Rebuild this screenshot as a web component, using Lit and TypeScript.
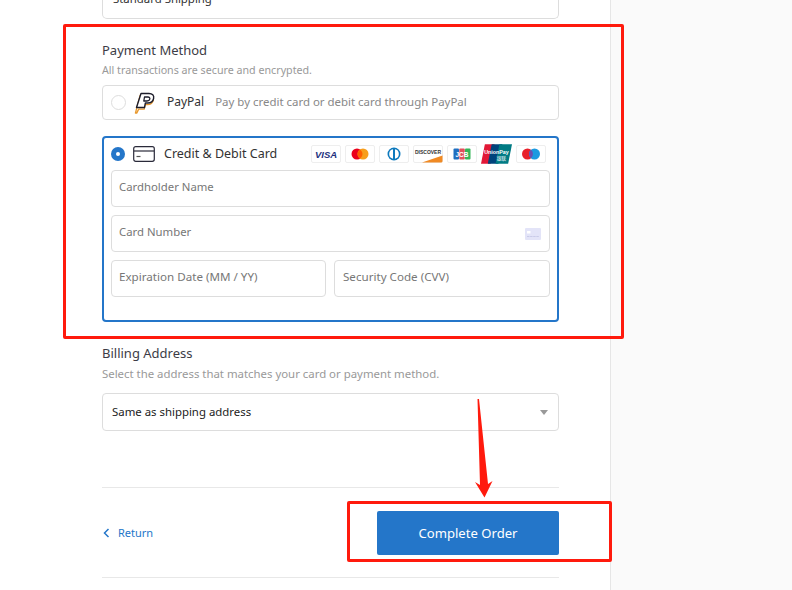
import { LitElement, html, css, svg } from "lit";
import { customElement } from "lit/decorators.js";

@customElement("app-root")
export class AppRoot extends LitElement {
  static styles = css`
    :host { display: flex; position: relative; width: 792px; height: 590px; overflow: hidden; background: #fff;
      font-family: "Noto Sans", "Open Sans", sans-serif; color: #333; }
    * { box-sizing: border-box; }
    .main { width: 611px; height: 590px; border-right: 1px solid #e6e6e6; padding-left: 102px; flex: none; }
    .side { flex: 1; background: #fafafa; }
    .col { width: 457px; }
    .ship { height: 40px; margin-top: -21px; border: 1px solid #ddd; border-top: 0; border-radius: 0 0 5px 5px;
      padding: 0 10px; font-size: 11.400px; line-height: 12px; color: #333; overflow: hidden; }
    .ship span { display: block; margin-top: 14px; }
    .title { font-size: 13px; line-height: 20px; color: #3c3c46; }
    .sub { font-size: 10.700px; line-height: 14px; color: #999; }
    .pay-title { margin-top: 21px; }
    .sub-pay { margin-top: 3px; }
    .paypal { height: 35px; margin-top: 8px; border: 1px solid #ddd; border-radius: 4px; display: flex; align-items: center; padding-left: 8px; }
    .radio-off { width: 15px; height: 15px; border: 1px solid #ddd; border-radius: 50%; flex: none; }
    .pp-icon { margin-left: 8px; flex: none; }
    .pp-name { margin-left: 11px; font-size: 12px; color: #333; margin-top: -2px; }
    .pp-desc { margin-left: 11px; font-size: 11.450px; color: #888; margin-top: -2px; }
    .card-box { height: 186px; margin-top: 16px; border: 2px solid #2476c9; border-radius: 4px; padding: 0 7px; }
    .card-head { height: 32px; display: flex; align-items: center; }
    .radio-on { width: 14px; height: 14px; border-radius: 50%; background: #2476c9; display: flex; align-items: center; justify-content: center; flex: none; }
    .radio-on i { width: 4px; height: 4px; border-radius: 50%; background: #fff; display: block; }
    .cc-icon { margin-left: 8px; flex: none; }
    .cc-name { margin-left: 9px; font-size: 12.500px; color: #333; white-space: nowrap; margin-top: -2px; }
    .logos { margin-left: auto; margin-right: 4px; display: flex; gap: 4px; align-items: center; }
    .logo { width: 30px; height: 18px; display: block; }
    .logo-up { width: 31px; height: 20px; }
    .field { height: 37px; border: 1px solid #ddd; border-radius: 4px; display: flex; align-items: center; padding: 0 8px 0 7px; font-size: 11.350px; color: #777; margin-bottom: 8px; position: relative; justify-content: space-between; }
    .field span { margin-top: -5px; }
    .split { display: flex; gap: 8px; }
    .split .field { flex: none; font-size: 11.620px; }
    .w1 { width: 215px; }
    .w2 { width: 216px; padding-left: 8px; }
    .bill-title { margin-top: 21px; }
    .bill-sub { margin-top: 4px; font-size: 11.400px; }
    .select { height: 38px; margin-top: 12px; border: 1px solid #ddd; border-radius: 4px; display: flex; align-items: center; justify-content: space-between; padding: 0 10px 0 9px; font-size: 11.400px; color: #222; }
    .select span { margin-top: -2px; }
    .caret { width: 0; height: 0; border-left: 4.500px solid transparent; border-right: 4.500px solid transparent; border-top: 5px solid #999; }
    .hr { height: 1px; background: #e8e8e8; }
    .hr1 { margin-top: 56px; }
    .actions { height: 89px; display: flex; align-items: center; justify-content: space-between; }
    .ret { display: flex; align-items: center; gap: 8px; font-size: 11px; color: #2476c9; padding-left: 1px; }
    .btn { width: 182px; height: 44px; background: #2476c9; color: #fff; border-radius: 2px; display: flex; align-items: center; justify-content: center; font-size: 13.100px; }
    .mark { position: absolute; border: 3px solid #ff1a0d; border-radius: 2px; pointer-events: none; }
    .m1 { left: 63px; top: 24px; width: 561px; height: 315px; }
    .m2 { left: 347px; top: 501px; width: 265px; height: 61px; }
    .arrow { position: absolute; left: 470px; top: 396px; }
  `;

  private logoFrame(inner: unknown) {
    return html`<svg class="logo" viewBox="0 0 30 18">
      <rect x=".5" y=".5" width="29" height="17" rx="1.500" fill="#fff" stroke="#eee"></rect>${inner}</svg>`;
  }

  render() {
    return html`
      <div class="main"><div class="col">
        <div class="ship"><span>Standard Shipping</span></div>
        <div class="title pay-title">Payment Method</div>
        <div class="sub sub-pay">All transactions are secure and encrypted.</div>
        <div class="paypal">
          <div class="radio-off"></div>
          <svg class="pp-icon" width="22" height="22" viewBox="0 0 22 22">
            <path d="M6.500 2.500h8.500c3.300 0 5.300 1.800 4.600 5-.6 2.900-3 4.500-5.800 4.500h-2.400l-.9 4.500H5L3 20.500H1.700z" fill="#fff" stroke="#e8982c" stroke-width="1.300" stroke-linejoin="round" transform="translate(-.3 .6)"></path>
            <path d="M7 1.500h8c3.300 0 5.300 1.800 4.600 5-.6 2.900-3 4.500-5.800 4.500h-2.400l-.9 4.500H2.500z" fill="#fff" stroke="#1d1d2b" stroke-width="1.400" stroke-linejoin="round"></path>
            <path d="M10.500 5h3.400c1.500 0 2.200.8 1.900 2.100-.3 1.300-1.400 1.900-2.800 1.900H9.800z" fill="#fff" stroke="#1d1d2b" stroke-width="1.300" stroke-linejoin="round"></path>
          </svg>
          <span class="pp-name">PayPal</span>
          <span class="pp-desc">Pay by credit card or debit card through PayPal</span>
        </div>
        <div class="card-box">
          <div class="card-head">
            <div class="radio-on"><i></i></div>
            <svg class="cc-icon" width="22" height="16" viewBox="0 0 22 16" fill="none">
              <rect x=".7" y=".7" width="20.600" height="14.600" rx="2" stroke="#2a2a3a" stroke-width="1.200"></rect>
              <path d="M1 5h20" stroke="#2a2a3a" stroke-width="1.200"></path>
              <path d="M3.500 10.500h4" stroke="#555" stroke-width="1.200"></path>
            </svg>
            <span class="cc-name">Credit &amp; Debit Card</span>
            <div class="logos">
              ${this.logoFrame(svg`<text x="15" y="12.500" text-anchor="middle" font-family="Liberation Sans" font-size="9.500" font-weight="700" font-style="italic" fill="#23307e">VISA</text>`)}
              ${this.logoFrame(svg`<circle cx="12" cy="9" r="5.500" fill="#eb001b"></circle><circle cx="18" cy="9" r="5.500" fill="#f79e1b"></circle><path d="M15 4.400a5.500 5.500 0 0 1 0 9.200a5.500 5.500 0 0 1 0-9.200z" fill="#ff5f00"></path>`)}
              ${this.logoFrame(svg`<circle cx="15" cy="9" r="6.500" fill="#0d79bd"></circle><path d="M14 4.300a4.800 4.800 0 0 0 0 9.400zM16 4.300a4.800 4.800 0 0 1 0 9.400z" fill="#fff"></path>`)}
              ${this.logoFrame(svg`<path d="M9 17.500 29.500 10.500V16a1.500 1.500 0 0 1-1.500 1.500z" fill="#f08a24"></path><text x="15" y="8.500" text-anchor="middle" font-family="Liberation Sans" font-size="5" font-weight="700" fill="#333">DISCOVER</text>`)}
              ${this.logoFrame(svg`<rect x="6.500" y="3.500" width="5.500" height="11" rx="1" fill="#1f6fc0"></rect><rect x="12.300" y="3.500" width="5.500" height="11" rx="1" fill="#e2505c"></rect><rect x="18" y="3.500" width="5.500" height="11" rx="1" fill="#35b558"></rect><text x="15" y="11.500" text-anchor="middle" font-family="Liberation Sans" font-size="6.500" font-weight="700" fill="#fff">JCB</text>`)}
              <svg class="logo logo-up" viewBox="0 0 32 20">
                <path d="M4 0h10L10 20H0z" fill="#e21837"></path>
                <path d="M11 0h11l-4 20H7z" fill="#00447c"></path>
                <path d="M19 0h13l-4 20H15z" fill="#007b84"></path>
                <text x="16" y="10" text-anchor="middle" font-family="Liberation Sans" font-size="5.500" font-weight="700" fill="#fff">UnionPay</text>
                <text x="21" y="16.500" text-anchor="middle" font-family="Noto Sans CJK SC" font-size="5" fill="#fff">银联</text>
              </svg>
              ${this.logoFrame(svg`<circle cx="11.500" cy="9" r="5.500" fill="#e8202a"></circle><circle cx="18.500" cy="9" r="5.500" fill="#1c9ae0"></circle><path d="M15 4.800a5.500 5.500 0 0 1 0 8.400a5.500 5.500 0 0 1 0-8.400z" fill="#6c4fb0"></path>`)}
            </div>
          </div>
          <div class="field"><span>Cardholder Name</span></div>
          <div class="field"><span>Card Number</span>
            <svg width="16" height="12" viewBox="0 0 16 12"><rect width="16" height="12" rx="1" fill="#e3e4f8"></rect><rect x="2" y="3" width="3.500" height="2.500" fill="#fff"></rect><path d="M2 8.500h12" stroke="#c9cbe8" stroke-width="1" stroke-dasharray="2.500 .6"></path></svg>
          </div>
          <div class="split">
            <div class="field w1"><span>Expiration Date (MM / YY)</span></div>
            <div class="field w2"><span>Security Code (CVV)</span></div>
          </div>
        </div>
        <div class="title bill-title">Billing Address</div>
        <div class="sub bill-sub">Select the address that matches your card or payment method.</div>
        <div class="select"><span>Same as shipping address</span><div class="caret"></div></div>
        <div class="hr hr1"></div>
        <div class="actions">
          <div class="ret">
            <svg width="7" height="10" viewBox="0 0 7 10" fill="none"><path d="M5.500 1 1.500 5l4 4" stroke="#2476c9" stroke-width="1.500"></path></svg>
            <span>Return</span>
          </div>
          <div class="btn">Complete Order</div>
        </div>
        <div class="hr"></div>
      </div></div>
      <div class="side"></div>
      <div class="mark m1"></div>
      <div class="mark m2"></div>
      <svg class="arrow" width="28" height="104" viewBox="0 0 28 104">
        <path d="M7.500 3 9 3 18 88 22.500 85 14.500 101.500 5 86 10 89z" fill="#ff1a0d"></path>
      </svg>
    `;
  }
}
